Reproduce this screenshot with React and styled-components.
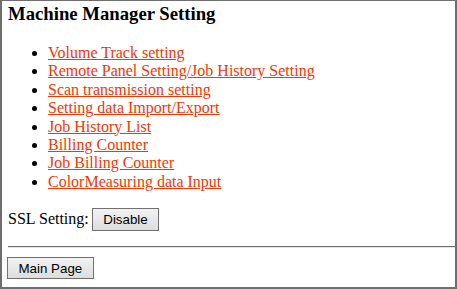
import styled, { createGlobalStyle } from "styled-components";

const Global = createGlobalStyle`
  html, body {
    margin: 0;
    background: #fff;
  }
  body {
    font-family: "Liberation Serif", "Times New Roman", serif;
    font-size: 16px;
    color: #000;
  }
`;

const Frame = styled.div`
  box-sizing: border-box;
  width: 457px;
  height: 289px;
  border: 2px solid #6e6e6e;
  border-top-width: 1px;
  padding: 2px 0 0 6px;
  overflow: hidden;
`;

const Title = styled.h3`
  font-size: 18.72px;
  font-weight: bold;
  margin: 0 0 19px;
`;

const LinkList = styled.ul`
  margin: 0 0 16px;
  padding-left: 40px;
`;

const Item = styled.li`
  line-height: 18.4px;
`;

const Link = styled.a`
  color: #ff3300;
  text-decoration: underline;
  cursor: pointer;
`;

const Row = styled.div`
  display: flex;
  align-items: center;
  gap: 3px;
  height: 24px;
`;

const Button = styled.button`
  font-family: "Liberation Sans", Arial, sans-serif;
  font-size: 13.33px;
  color: #000;
  height: ${(p) => p.$h || 23}px;
  padding: 0 ${(p) => p.$px || 10}px;
  margin-left: ${(p) => p.$ml || 0}px;
  border: 1px solid #707070;
  border-radius: 0;
  background: linear-gradient(#f2f2f2, #dddddd);
  cursor: pointer;
`;

const Rule = styled.hr`
  margin: 15px 0 9px 0;
  border: 0;
  border-top: 1px solid #6e6e6e;
  border-bottom: 1px solid #e4e4e4;
`;

const links = [
  "Volume Track setting",
  "Remote Panel Setting/Job History Setting",
  "Scan transmission setting",
  "Setting data Import/Export",
  "Job History List",
  "Billing Counter",
  "Job Billing Counter",
  "ColorMeasuring data Input",
];

export default function App() {
  return (
    <>
      <Global />
      <Frame>
        <Title>Machine Manager Setting</Title>
        <LinkList>
          {links.map((l) => (
            <Item key={l}>
              <Link>{l}</Link>
            </Item>
          ))}
        </LinkList>
        <Row>
          <span>SSL Setting:</span>
          <Button $px={10.5}>Disable</Button>
        </Row>
        <Rule />
        <Button $h={22} $px={10.5} $ml={-1}>Main Page</Button>
      </Frame>
    </>
  );
}
